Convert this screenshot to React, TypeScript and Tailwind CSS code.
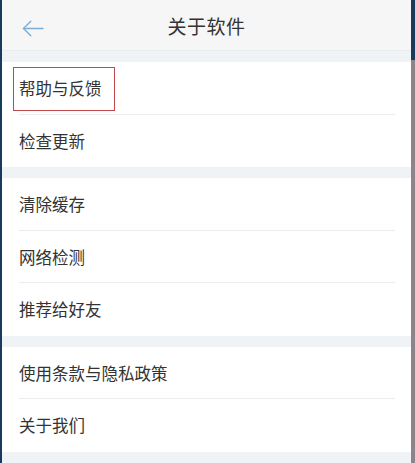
const groups = [
    ['帮助与反馈', '检查更新'],
    ['清除缓存', '网络检测', '推荐给好友'],
    ['使用条款与隐私政策', '关于我们'],
];

const App = () => {
    return (
        <div
            className="flex w-[415px] h-[463px] overflow-hidden bg-[#f0f3f5]"
            style={{ fontFamily: '"Noto Sans CJK SC", "Noto Sans", sans-serif' }}
        >
            {/* left frame edge */}
            <div className="w-[2px] h-full bg-[#173a5d] shrink-0" />

            <div className="flex-1 flex flex-col bg-[#f0f3f5]">
                {/* Header */}
                <header className="relative h-[51px] shrink-0 flex items-center justify-center bg-[#f6f6f6] border-b border-[#e8edf0]">
                    <button className="absolute left-[20px] top-[20px] text-[#7aaedb]">
                        <svg width="22" height="17" viewBox="0 0 22 17" fill="none" stroke="currentColor" strokeWidth="1.4" strokeLinecap="round" strokeLinejoin="round">
                            <path d="M21 8.5H1.5" />
                            <path d="M8.8 1.2L1.5 8.5l7.3 7.3" />
                        </svg>
                    </button>
                    <h1 className="text-[19px] text-[#333333] tracking-[0.5px] leading-none">关于软件</h1>
                </header>

                {/* Groups */}
                <div className="flex flex-col gap-[11px] pt-[11px]">
                    {groups.map((items, gi) => (
                        <div key={gi} className="bg-white">
                            {items.map((label, i) => (
                                <div key={label} className="relative h-[52.5px] flex items-center pl-[17px] pr-[16px]">
                                    <span className="text-[16.5px] text-[#333333] leading-none">{label}</span>
                                    {i < items.length - 1 && (
                                        <div className="absolute left-[17px] right-[16px] bottom-0 h-px bg-[#ececec]" />
                                    )}
                                    {gi === 0 && i === 0 && (
                                        <div className="absolute left-[11px] top-[5px] w-[102px] h-[44px] border border-[#c0474a]" />
                                    )}
                                </div>
                            ))}
                        </div>
                    ))}
                </div>
            </div>

            {/* right frame edge */}
            <div className="w-[4px] h-full shrink-0 flex flex-col">
                <div className="h-[60px] bg-[#173a5d]" />
                <div className="flex-1 bg-[#8d8388]" />
            </div>
        </div>
    );
};

export default App;
